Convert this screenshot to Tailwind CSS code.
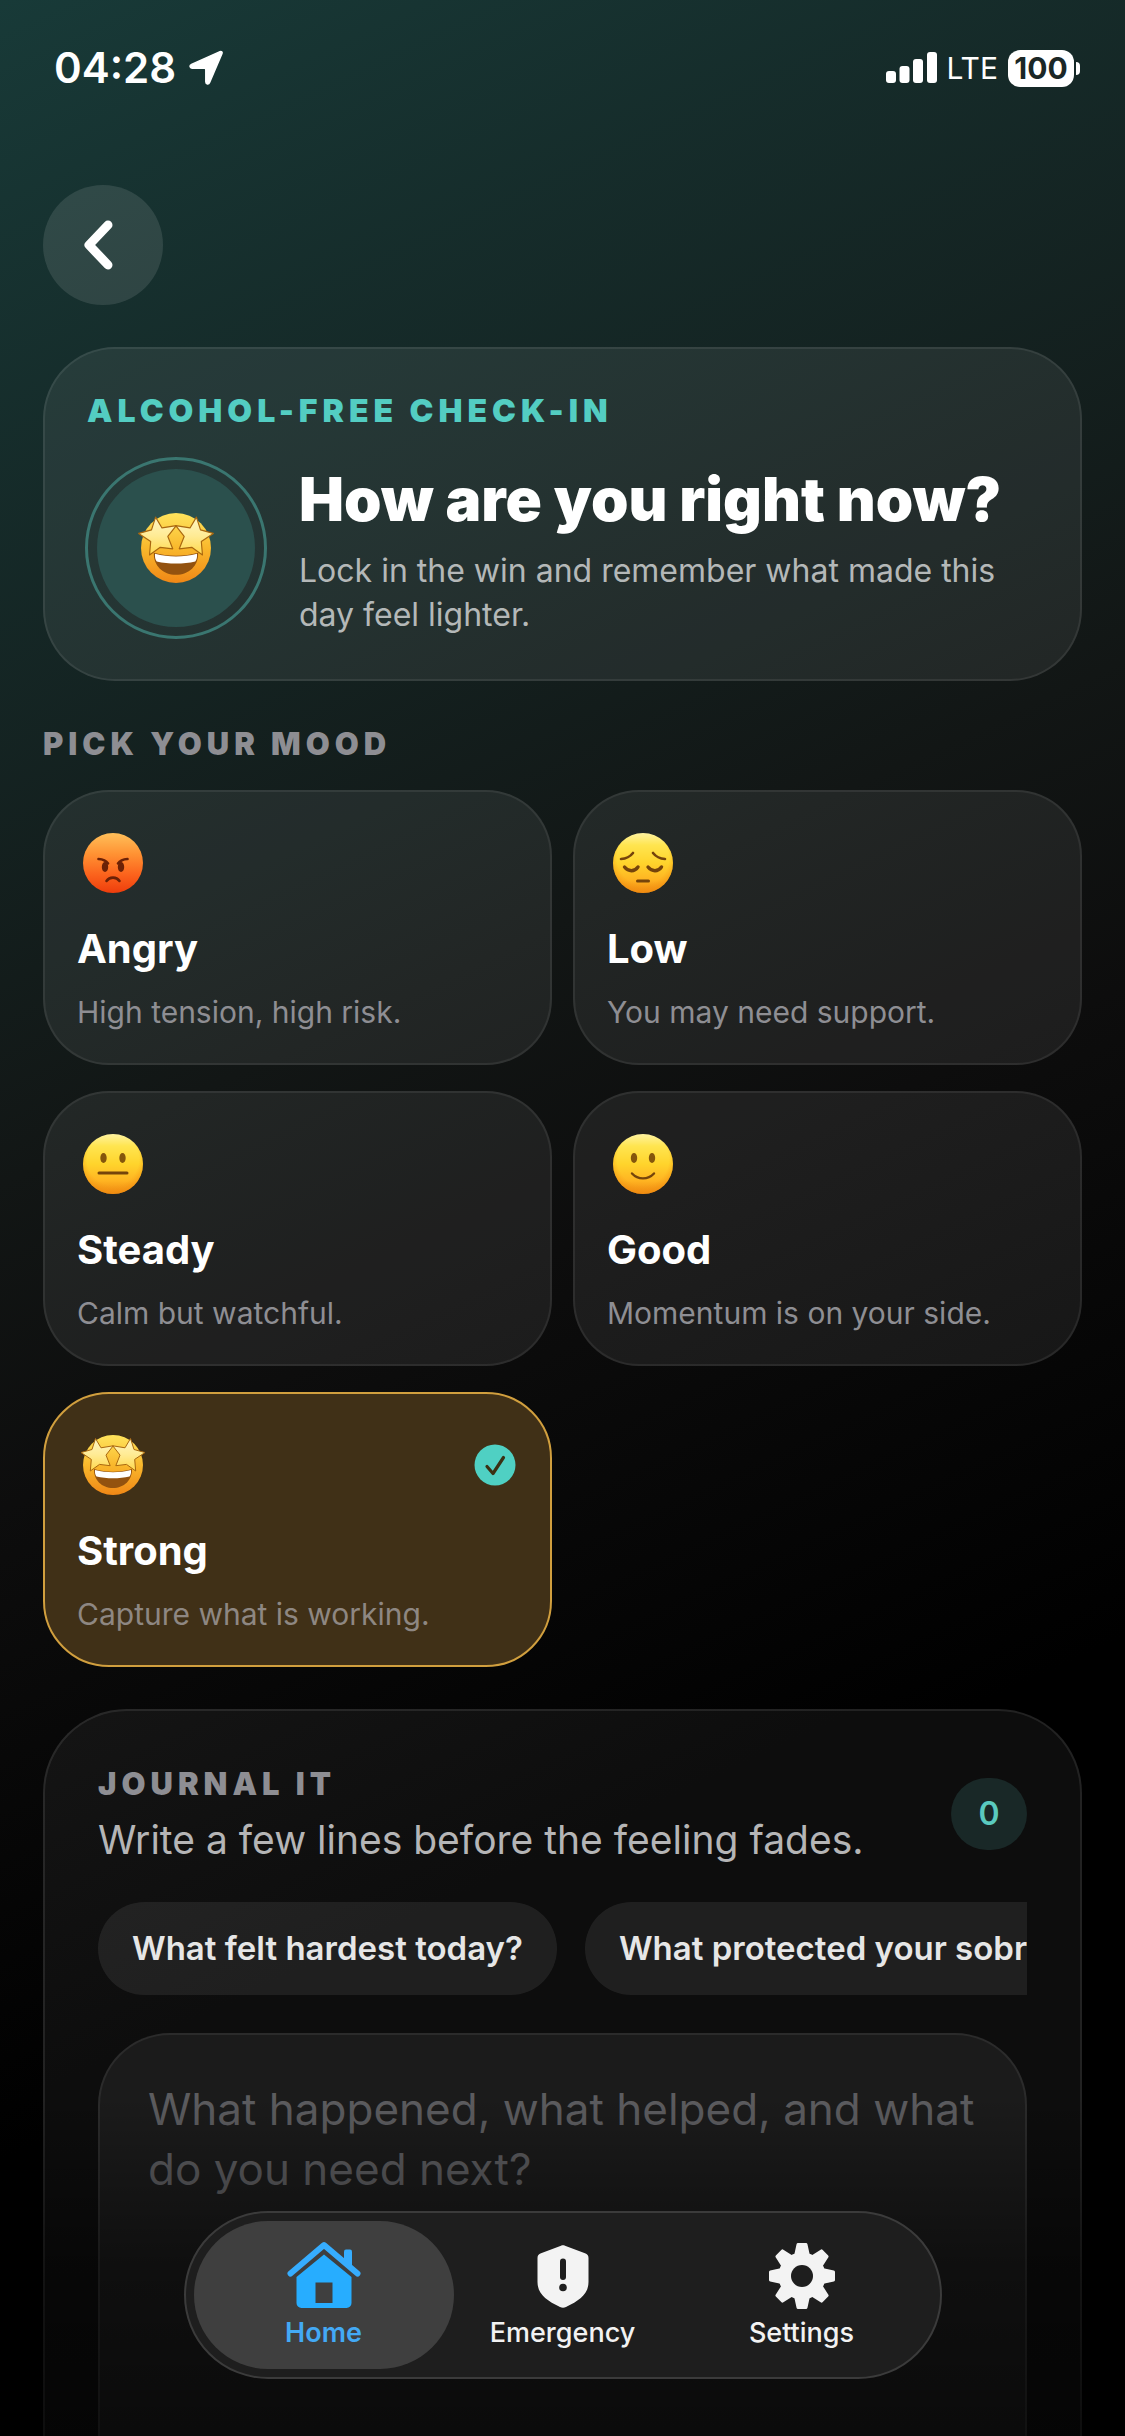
<!DOCTYPE html>
<html lang="en">
<head>
<meta charset="utf-8">
<meta name="viewport" content="width=device-width, initial-scale=1">
<title>Alcohol-free check-in</title>
<script src="https://cdn.jsdelivr.net/npm/@tailwindcss/browser@4"></script>
</head>
<body class="bg-black font-['Inter','Liberation_Sans',sans-serif] text-white">

<!-- Shared icon definitions -->
<svg class="absolute size-0" aria-hidden="true">
  <defs>
    <linearGradient id="yellow" x1="0" y1="0" x2="0" y2="1">
      <stop offset="0" stop-color="#fff3a0"/><stop offset=".2" stop-color="#ffe550"/><stop offset=".5" stop-color="#ffd42c"/><stop offset=".78" stop-color="#ffb422"/><stop offset="1" stop-color="#ee8610"/>
    </linearGradient>
    <radialGradient id="rim" cx=".5" cy=".42" r=".6">
      <stop offset=".72" stop-color="#f59a14" stop-opacity="0"/><stop offset="1" stop-color="#f08c10" stop-opacity=".75"/>
    </radialGradient>
    <linearGradient id="red" x1="0" y1="0" x2="0" y2="1">
      <stop offset="0" stop-color="#ffc05a"/><stop offset=".35" stop-color="#ff9233"/><stop offset=".7" stop-color="#fb621c"/><stop offset="1" stop-color="#ee3d0c"/>
    </linearGradient>
    <linearGradient id="amber" x1="0" y1="0" x2="0" y2="1">
      <stop offset="0" stop-color="#ffe45c"/><stop offset=".5" stop-color="#f9b82c"/><stop offset="1" stop-color="#f08716"/>
    </linearGradient>
    <linearGradient id="star" x1="0" y1="0" x2="0" y2="1">
      <stop offset="0" stop-color="#fff6c4"/><stop offset=".5" stop-color="#ffeb94"/><stop offset="1" stop-color="#ffd84a"/>
    </linearGradient>
  </defs>
  <symbol id="angry" viewBox="0 0 72 72">
    <circle cx="36" cy="36" r="30" fill="url(#red)"/>
    <path d="M21.500 32c4 .2 7.500 1.500 9.500 4.500M50.500 32c-4 .2-7.500 1.500-9.500 4.500M29.500 54c3-4.500 10-4.500 13 0" fill="none" stroke="#6b2106" stroke-width="2.600" stroke-linecap="round"/>
    <ellipse cx="28" cy="40" rx="3.200" ry="5" fill="#6b2106"/><ellipse cx="44" cy="40" rx="3.200" ry="5" fill="#6b2106"/>
  </symbol>
  <symbol id="low" viewBox="0 0 72 72">
    <circle cx="36" cy="36" r="30" fill="url(#yellow)"/><circle cx="36" cy="36" r="30" fill="url(#rim)"/>
    <path d="M14 32c5-.3 9-2.200 12-6M58 32c-5-.3-9-2.200-12-6" fill="none" stroke="#75440b" stroke-width="2.600" stroke-linecap="round"/>
    <path d="M17.500 40c4 5 10 5 13.500 0M41 40c4 5 10 5 13.500 0" fill="none" stroke="#75440b" stroke-width="3.400" stroke-linecap="round"/>
    <path d="M30.500 54h11" stroke="#75440b" stroke-width="3" stroke-linecap="round"/>
  </symbol>
  <symbol id="steady" viewBox="0 0 72 72">
    <circle cx="36" cy="36" r="30" fill="url(#yellow)"/><circle cx="36" cy="36" r="30" fill="url(#rim)"/>
    <ellipse cx="26.500" cy="30" rx="3.200" ry="5" fill="#84560c"/><ellipse cx="45.500" cy="30" rx="3.200" ry="5" fill="#84560c"/>
    <path d="M22 45h28" stroke="#75440b" stroke-width="3" stroke-linecap="round"/>
  </symbol>
  <symbol id="good" viewBox="0 0 72 72">
    <circle cx="36" cy="36" r="30" fill="url(#yellow)"/><circle cx="36" cy="36" r="30" fill="url(#rim)"/>
    <ellipse cx="27" cy="30" rx="3.200" ry="5" fill="#84560c"/><ellipse cx="45" cy="30" rx="3.200" ry="5" fill="#84560c"/>
    <path d="M25 45.500c6 6.500 16 6.500 22 0" fill="none" stroke="#75440b" stroke-width="2.400" stroke-linecap="round"/>
  </symbol>
  <symbol id="strong" viewBox="0 0 72 72">
    <circle cx="36" cy="36" r="30" fill="url(#amber)"/>
    <path d="M17 40c12 3.500 26 3.500 38 0 .5 11-8 19-19 19s-19.500-8-19-19Z" fill="#93520f"/>
    <path d="M18 41c12 3 24 3 36 0 .3 3-.3 5-1.500 6.500-10 2.400-23 2.400-33 0C18.300 46 17.700 44 18 41Z" fill="#fff"/>
    <path d="M18.500 9.500l5.500 9.300 12.200-2-7.200 9.300 4.200 10.600-10.700-1.300-9.200 6.600 1-11.600L4 23.500l11-3Z" fill="url(#star)" stroke="#a9670f" stroke-width="1" stroke-linejoin="round"/>
    <path d="M53.500 9.500L48 18.800l-12.200-2 7.200 9.300-4.200 10.600 10.700-1.300 9.200 6.600-1-11.600 10.300-6.900-11-3Z" fill="url(#star)" stroke="#a9670f" stroke-width="1" stroke-linejoin="round"/>
  </symbol>
</svg>

<div class="relative flex h-dvh flex-col overflow-hidden bg-[linear-gradient(155deg,#183a38_0%,#121615_40%,#0d0d0d_51%,#000000_73%)]">

  <!-- Status bar -->
  <header class="flex h-[136px] shrink-0 items-center justify-between pr-[45px] pl-[54px]">
    <div class="flex items-center gap-3">
      <time class="text-[42px] leading-none font-semibold">04:28</time>
      <svg class="h-[36px] w-[36px]" viewBox="0 0 36 36" fill="#fff" aria-label="Location in use"><path d="M34 3.500 21.600 32.500c-1 2.300-3.800 1.800-3.800-.7V19.500c0-.8-.5-1.300-1.300-1.300H4.200c-2.500 0-3-2.800-.7-3.800L32 1.600c1.400-.6 2.600.6 2 1.900Z" stroke="#fff" stroke-width="1.500"/></svg>
    </div>
    <div class="flex items-center gap-[10px]">
      <svg class="h-[32px] w-[51px]" viewBox="0 0 51 32" fill="#fff" aria-label="Signal strength"><rect y="19" width="10" height="12" rx="3"/><rect x="13.500" y="14" width="10" height="17" rx="3"/><rect x="27" y="7" width="10" height="24" rx="3"/><rect x="41" width="10" height="31" rx="3"/></svg>
      <span class="text-[30px] leading-none">LTE</span>
      <div class="flex items-center gap-[2px]">
        <span class="flex h-[37px] w-[66px] items-center justify-center rounded-[12px] bg-white text-[30px] leading-none font-bold text-[#1b2726]">100</span>
        <span class="h-[13px] w-[4px] rounded-r-full bg-white"></span>
      </div>
    </div>
  </header>

  <main class="flex min-h-0 flex-1 flex-col gap-[42px] overflow-y-auto px-[43px] pt-[49px] [scrollbar-width:none]">
    <button type="button" aria-label="Back" class="flex size-[120px] shrink-0 items-center justify-center rounded-full bg-white/11">
      <svg class="h-[52px] w-[52px]" viewBox="0 0 52 52" fill="none" stroke="#fff" stroke-width="9" stroke-linecap="round" stroke-linejoin="round"><path d="M31 6 12 26l19 20"/></svg>
    </button>

    <!-- Hero -->
    <section class="shrink-0 rounded-[72px] border-2 border-white/8 bg-white/7 px-10 pt-[42px] pb-10">
      <p class="px-[2px] text-[32px] leading-[40px] font-black tracking-[5px] text-[#53cdc2]">ALCOHOL-FREE CHECK-IN</p>
      <div class="mt-[26px] flex gap-8">
        <div class="flex size-[182px] shrink-0 items-center justify-center rounded-full border-3 border-[#3a7670]">
          <div class="flex size-[158px] items-center justify-center rounded-full bg-[#2b504d]">
            <svg class="size-[84px]" role="img" aria-label="Strong"><use href="#strong"/></svg>
          </div>
        </div>
        <div class="pt-2">
          <h1 class="text-[60px] leading-[68px] font-black">How are you right now?</h1>
          <p class="mt-4 text-[32px] leading-[44px] text-[#b4b8b8]">Lock in the win and remember what made this day feel lighter.</p>
        </div>
      </div>
    </section>

    <!-- Mood picker -->
    <fieldset class="shrink-0">
      <legend class="mb-[25px] text-[31px] leading-[42px] font-black tracking-[5px] text-[#8e8e93]">PICK YOUR MOOD</legend>
      <div class="grid grid-cols-2 gap-x-[21px] gap-y-[26px]">
        <label class="relative rounded-[66px] border-2 border-white/7 bg-white/7 p-8 has-checked:border-[#d19f3e] has-checked:bg-[#403017]">
          <input type="radio" name="mood" value="angry" class="peer sr-only">
          <span class="flex h-[77px] items-center"><svg class="size-[72px]" aria-hidden="true"><use href="#angry"/></svg></span>
          <span class="mt-6 block text-[40px] leading-[48px] font-bold">Angry</span>
          <span class="mt-5 block text-[30px] leading-[38px] text-[#8e8e93]">High tension, high risk.</span>
        </label>
        <label class="relative rounded-[66px] border-2 border-white/7 bg-white/7 p-8 has-checked:border-[#d19f3e] has-checked:bg-[#403017]">
          <input type="radio" name="mood" value="low" class="peer sr-only">
          <span class="flex h-[77px] items-center"><svg class="size-[72px]" aria-hidden="true"><use href="#low"/></svg></span>
          <span class="mt-6 block text-[40px] leading-[48px] font-bold">Low</span>
          <span class="mt-5 block text-[30px] leading-[38px] text-[#8e8e93]">You may need support.</span>
        </label>
        <label class="relative rounded-[66px] border-2 border-white/7 bg-white/7 p-8 has-checked:border-[#d19f3e] has-checked:bg-[#403017]">
          <input type="radio" name="mood" value="steady" class="peer sr-only">
          <span class="flex h-[77px] items-center"><svg class="size-[72px]" aria-hidden="true"><use href="#steady"/></svg></span>
          <span class="mt-6 block text-[40px] leading-[48px] font-bold">Steady</span>
          <span class="mt-5 block text-[30px] leading-[38px] text-[#8e8e93]">Calm but watchful.</span>
        </label>
        <label class="relative rounded-[66px] border-2 border-white/7 bg-white/7 p-8 has-checked:border-[#d19f3e] has-checked:bg-[#403017]">
          <input type="radio" name="mood" value="good" class="peer sr-only">
          <span class="flex h-[77px] items-center"><svg class="size-[72px]" aria-hidden="true"><use href="#good"/></svg></span>
          <span class="mt-6 block text-[40px] leading-[48px] font-bold">Good</span>
          <span class="mt-5 block text-[30px] leading-[38px] text-[#8e8e93]">Momentum is on your side.</span>
        </label>
        <label class="relative rounded-[66px] border-2 border-white/7 bg-white/7 p-8 has-checked:border-[#d19f3e] has-checked:bg-[#403017]">
          <input type="radio" name="mood" value="strong" class="peer sr-only" checked>
          <span class="flex h-[77px] items-center justify-between pr-[2px]">
            <svg class="size-[72px]" aria-hidden="true"><use href="#strong"/></svg>
            <svg class="size-[42px]" viewBox="0 0 42 42" aria-hidden="true"><circle cx="21" cy="21" r="20.500" fill="#4fd0c3"/><path d="m13 22.500 6 7 10.500-16" fill="none" stroke="#3b3013" stroke-width="3.200" stroke-linecap="round" stroke-linejoin="round"/></svg>
          </span>
          <span class="mt-6 block text-[40px] leading-[48px] font-bold">Strong</span>
          <span class="mt-5 block text-[30px] leading-[38px] text-[#8e8782]">Capture what is working.</span>
        </label>
      </div>
    </fieldset>

    <!-- Journal -->
    <section class="flex shrink-0 flex-col gap-[38px] rounded-[84px] border-2 border-white/9 bg-white/5 p-[53px]">
      <div class="flex items-center justify-between">
        <div>
          <h2 class="text-[31px] leading-[40px] font-black tracking-[5px] text-[#8e8e93]">JOURNAL IT</h2>
          <label for="entry" class="mt-3 block text-[39px] leading-[48px] text-[#b5b5b6]">Write a few lines before the feeling fades.</label>
        </div>
        <output for="entry" class="flex h-[72px] w-[76px] items-center justify-center rounded-full bg-[#192827] text-[32px] leading-none font-semibold text-[#5acabf]">0</output>
      </div>
      <div class="flex gap-7 overflow-hidden">
        <button type="button" class="shrink-0 rounded-full bg-white/8 px-[34px] py-[26px] text-[33px] leading-[41px] font-semibold whitespace-nowrap text-[#e6e6e6]">What felt hardest today?</button>
        <button type="button" class="shrink-0 rounded-full bg-white/8 px-[34px] py-[26px] text-[33px] leading-[41px] font-semibold whitespace-nowrap text-[#e6e6e6]">What protected your sobriety?</button>
      </div>
      <textarea id="entry" class="block h-[560px] w-full resize-none rounded-[72px] border-2 border-white/7 bg-white/6 px-12 py-11 text-[44px] leading-[60px] text-white outline-none placeholder:text-[#5c5c5f]" placeholder="What happened, what helped, and what do you need next?"></textarea>
    </section>
  </main>

  <!-- Fade behind the tab bar -->
  <div class="pointer-events-none absolute inset-x-0 bottom-0 h-[340px] bg-linear-to-b from-transparent via-black/45 to-black/60"></div>

  <!-- Tab bar -->
  <nav class="absolute bottom-[57px] left-1/2 flex w-[758px] max-w-full -translate-x-1/2 rounded-full border-2 border-[#3b3b3b] bg-[#1e1e1e] p-2 text-[27px] leading-[32px] font-medium text-[#f2f2f2]">
    <a href="#home" aria-current="page" class="flex h-[148px] w-[260px] flex-col items-center gap-2 rounded-full bg-[#3f3f3f] pt-5 font-semibold text-[#43a9f5]">
      <svg class="h-[68px] w-[76px]" viewBox="0 0 76 68" fill="#27adff" aria-hidden="true">
        <path d="M4.500 32.500 38 4l33.500 28.500" fill="none" stroke="#36adff" stroke-width="6" stroke-linecap="round" stroke-linejoin="round"/>
        <path d="M58 22V10.500a2 2 0 0 1 2-2h4a2 2 0 0 1 2 2V29Z" fill="#36adff"/>
        <path fill-rule="evenodd" d="M38 13.500 65.500 36v26a5 5 0 0 1-5 5h-45a5 5 0 0 1-5-5V36Zm-8.500 28v20.500h17V41.500Z"/>
      </svg>
      Home
    </a>
    <a href="#emergency" class="flex h-[148px] flex-1 flex-col items-center gap-2 pt-5">
      <svg class="h-[68px] w-[76px]" viewBox="0 0 76 68" aria-hidden="true">
        <path d="M36 4.800c1.300-.6 2.700-.6 4 0l20 7.400c2.300.9 3.500 2.200 3.500 4.800v24c0 12-9 18.500-22.500 25-2 1-4 1-6 0C21.500 59.500 12.500 53 12.500 41V17c0-2.600 1.200-3.900 3.500-4.800Z" fill="#f3f3f3"/>
        <path d="M38 20.500v15.500" stroke="#1e1e1e" stroke-width="6" stroke-linecap="round"/><circle cx="38" cy="46.500" r="3.800" fill="#1e1e1e"/>
      </svg>
      Emergency
    </a>
    <a href="#settings" class="flex h-[148px] w-[260px] flex-col items-center gap-2 pt-5">
      <svg class="h-[68px] w-[76px]" viewBox="0 0 76 68" aria-hidden="true">
        <g fill="#f3f3f3" stroke="#f3f3f3" stroke-width="3" stroke-linejoin="round">
          <circle cx="38" cy="35" r="22"/>
          <path id="tooth" d="M31.500 15 34 3.500h8l2.500 11.500Z"/>
          <use href="#tooth" transform="rotate(45 38 35)"/><use href="#tooth" transform="rotate(90 38 35)"/><use href="#tooth" transform="rotate(135 38 35)"/><use href="#tooth" transform="rotate(180 38 35)"/><use href="#tooth" transform="rotate(225 38 35)"/><use href="#tooth" transform="rotate(270 38 35)"/><use href="#tooth" transform="rotate(315 38 35)"/>
        </g>
        <circle cx="38" cy="35" r="11" fill="#1e1e1e"/>
      </svg>
      Settings
    </a>
  </nav>
</div>
</body>
</html>
